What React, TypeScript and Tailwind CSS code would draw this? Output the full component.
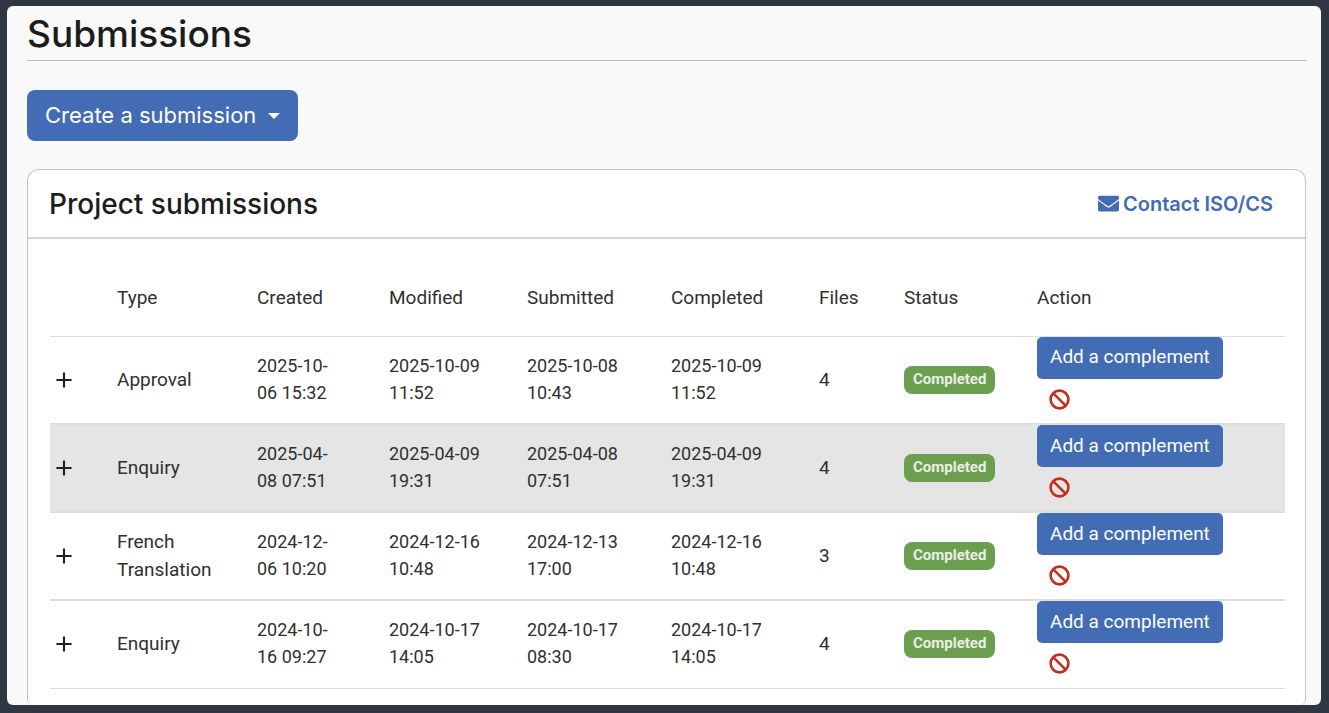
import { FaEnvelope } from "react-icons/fa";
import { MdAdd } from "react-icons/md";

type Submission = {
  type: string;
  created: string;
  modified: string;
  submitted: string;
  completed: string;
  files: number;
  status: string;
  highlighted?: boolean;
};

const submissions: Submission[] = [
  { type: "Approval", created: "2025-10-06 15:32", modified: "2025-10-09 11:52", submitted: "2025-10-08 10:43", completed: "2025-10-09 11:52", files: 4, status: "Completed" },
  { type: "Enquiry", created: "2025-04-08 07:51", modified: "2025-04-09 19:31", submitted: "2025-04-08 07:51", completed: "2025-04-09 19:31", files: 4, status: "Completed", highlighted: true },
  { type: "French Translation", created: "2024-12-06 10:20", modified: "2024-12-16 10:48", submitted: "2024-12-13 17:00", completed: "2024-12-16 10:48", files: 3, status: "Completed" },
  { type: "Enquiry", created: "2024-10-16 09:27", modified: "2024-10-17 14:05", submitted: "2024-10-17 08:30", completed: "2024-10-17 14:05", files: 4, status: "Completed" },
];

const columns = ["Type", "Created", "Modified", "Submitted", "Completed", "Files", "Status", "Action"];

function BanIcon() {
  return (
    <svg width="21" height="21" viewBox="0 0 21 21" fill="none" stroke="currentColor" strokeWidth="2.6" aria-hidden="true">
      <circle cx="10.5" cy="10.5" r="8.9" />
      <path d="M4.4 4.4l12.2 12.2" />
    </svg>
  );
}

function SubmissionRow({ item }: { item: Submission }) {
  return (
    <tr className={`h-[88px] border-b-2 border-[#dfdfdf] last:border-b ${item.highlighted ? "bg-[#e5e5e5]" : "bg-white"}`}>
      <td className="pl-px">
        <button type="button" aria-label="Expand row" className="block text-[#212121]">
          <MdAdd size={26} />
        </button>
      </td>
      <td className="px-[22px] text-[19px] leading-7">{item.type}</td>
      {[item.created, item.modified, item.submitted, item.completed].map((date, i) => (
        <td key={i} className="px-[22px] pb-0.5 text-lg leading-[27px]">{date}</td>
      ))}
      <td className="px-[22px] text-[19px]">{item.files}</td>
      <td className="pl-[22px]">
        <span className="block w-fit rounded-lg bg-[#6c9e4f] px-[9px] pb-0.5 text-[15px] leading-[26px] font-bold text-[#e8efe4]">
          {item.status}
        </span>
      </td>
      <td className="pl-[22px] align-top">
        <button type="button" className="block h-[42px] rounded-[5px] bg-[#426cb4] px-[13px] text-[19px] whitespace-nowrap text-white">
          Add a complement
        </button>
        <button type="button" aria-label="Cancel" className="mt-2.5 ml-3 block text-[#c0301f]">
          <BanIcon />
        </button>
      </td>
    </tr>
  );
}

export default function App() {
  return (
    <div className="flex min-h-screen flex-col bg-[#303642] pt-1.5 pr-2 pb-2 pl-[7px] font-['Inter',sans-serif] text-[#212121]">
      <main className="flex flex-1 flex-col overflow-hidden rounded-md bg-[#f9f9f9] pr-[15px] pl-5">
        <h1 className="border-b border-[#bcbcbc] pt-1.5 pb-1 text-[37px] leading-[44px] font-medium text-[#1c1c1c]">Submissions</h1>
        <button type="button" className="mt-[29px] flex h-[51px] items-center gap-3 self-start rounded-lg bg-[#426cb4] px-[18px] text-[22px] text-white">
          Create a submission
          <svg width="12" height="6" viewBox="0 0 12 6" fill="currentColor" aria-hidden="true">
            <path d="M0 0h12L6 6z" />
          </svg>
        </button>

        <section className="mt-7 flex-1 rounded-t-xl rounded-b-md border border-b-0 border-[#c4c4c4] bg-white">
          <header className="flex h-[69px] items-center justify-between border-b-2 border-[#d4d4d4] pr-8 pl-[21px]">
            <h2 className="text-[28px] font-medium text-[#1c1c1c]">Project submissions</h2>
            <a href="#contact" className="flex items-center gap-1 text-[20px] font-semibold text-[#426cb4]">
              <FaEnvelope size={21} />
              Contact ISO/CS
            </a>
          </header>

          <div className="pt-[21px] pr-5 pb-3 pl-[22px]">
            <table className="w-full table-fixed border-collapse text-left font-['Roboto',sans-serif] text-[#303030]">
              <colgroup>
                <col className="w-[45px]" />
                <col className="w-[140px]" />
                <col className="w-[132px]" />
                <col className="w-[138px]" />
                <col className="w-[144px]" />
                <col className="w-[148px]" />
                <col className="w-[85px]" />
                <col className="w-[133px]" />
                <col />
              </colgroup>
              <thead>
                <tr className="h-[76px] border-b border-[#dfdfdf]">
                  <td />
                  {columns.map((name) => (
                    <th key={name} scope="col" className="pl-[22px] text-[19px] font-normal">{name}</th>
                  ))}
                </tr>
              </thead>
              <tbody>
                {submissions.map((item) => (
                  <SubmissionRow key={item.created} item={item} />
                ))}
              </tbody>
            </table>
          </div>
        </section>
      </main>
    </div>
  );
}
